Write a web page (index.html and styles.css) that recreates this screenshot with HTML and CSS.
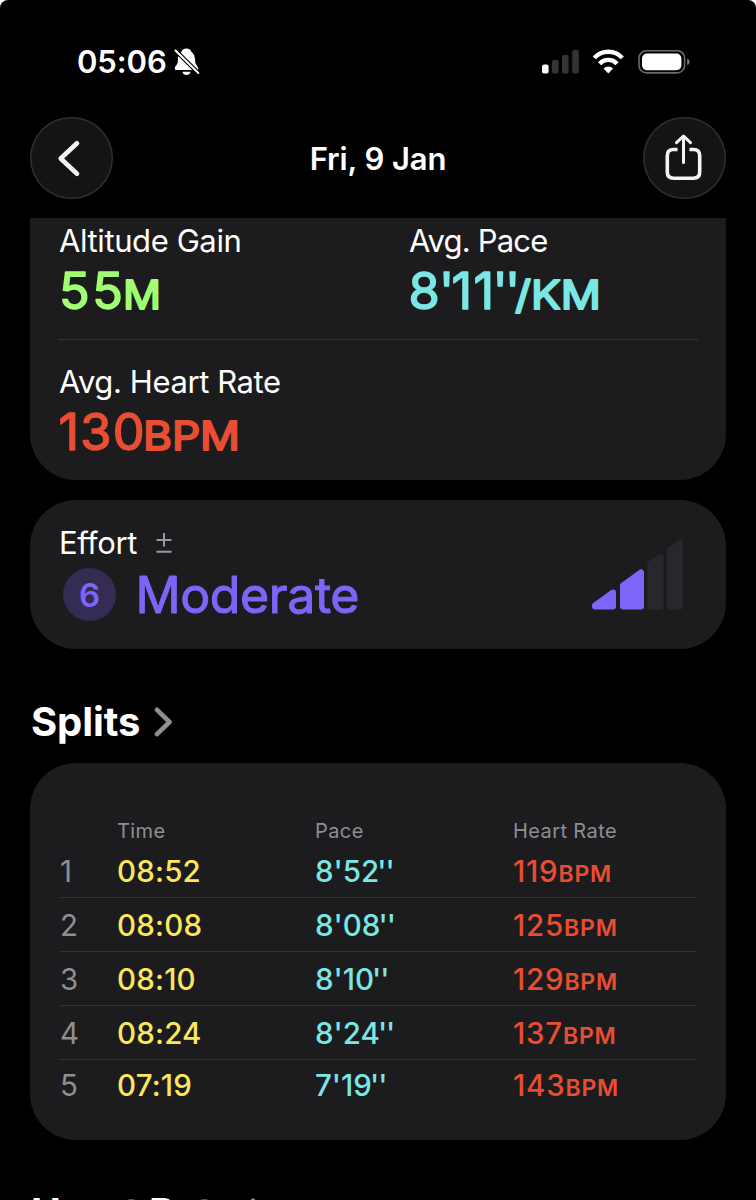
FILE: index.html
```html
<!DOCTYPE html>
<html lang="en">
<head>
<meta charset="utf-8">
<title>Workout</title>
<link rel="stylesheet" href="styles.css">
</head>
<body>
<main class="screen">
  <header class="status">
    <span class="clock">05:06</span>
    <svg class="bell" width="26" height="28" viewBox="0 0 26 28"><path d="M12.500 0.500C9.500 0.500 8 2 7.300 4C4 6.500 4 10 3.800 13.500C3.600 17 0.800 18 0.800 20.500C0.800 21.500 1.500 22 2.500 22H22.500C23.600 22 24.400 21.300 24.200 20.300C23.800 18 21.500 17 21.200 13.500C20.900 9.500 20.800 6.500 17.500 4C16.800 2 15.300 0.500 12.500 0.500Z" fill="#fff"/><path d="M8.500 23.800H16.500C16.500 25.700 14.800 27 12.500 27S8.500 25.700 8.500 23.800Z" fill="#fff"/><path d="M1.500 2.500L24.300 25" stroke="#000" stroke-width="4.200" stroke-linecap="round"/><path d="M1.500 2.500L24.300 25" stroke="#fff" stroke-width="2" stroke-linecap="round"/></svg>
    <svg class="system" width="150" height="26" viewBox="0 0 150 26">
      <rect x="2" y="15.500" width="6.600" height="9" rx="2" fill="#fff"/>
      <g fill="#343434"><rect x="12" y="11" width="6.600" height="13.500" rx="2"/><rect x="22" y="6" width="6.600" height="18.500" rx="2"/><rect x="32.200" y="1" width="6.600" height="23.500" rx="2"/></g>
      <g fill="none" stroke="#fff" stroke-width="4.300"><path d="M54.300 8.900A19 19 0 0 1 82.300 8.900"/><path d="M59.600 14.700A12 12 0 0 1 77 14.700"/></g>
      <path d="M68.300 24.500L63.500 19.500A7 7 0 0 1 73.100 19.500Z" fill="#fff"/>
      <rect x="99" y="1.700" width="45.600" height="22.200" rx="7.500" fill="none" stroke="#6b6b6b" stroke-width="1.600"/>
      <rect x="102" y="4.500" width="39.400" height="16.800" rx="5" fill="#fff"/>
      <path d="M147.200 9.500Q149.700 10.500 149.700 12.900T147.200 16.300Z" fill="#777"/>
    </svg>
  </header>

  <nav class="nav">
    <div class="round"><svg width="82" height="82" viewBox="0 0 82 82"><path d="M47 26.300L30.700 41.500L47 56.700" fill="none" stroke="#f4f4f6" stroke-width="4.600" stroke-linecap="round" stroke-linejoin="round"/></svg></div>
    <h1 class="title">Fri, 9 Jan</h1>
    <div class="round"><svg width="82" height="82" viewBox="0 0 82 82"><g fill="none" stroke="#f4f4f6" stroke-width="3.600" stroke-linecap="round" stroke-linejoin="round"><path d="M34.500 32.500H30.500Q24.300 32.500 24.300 38.700V55Q24.300 61.200 30.500 61.200H50.500Q56.700 61.200 56.700 55V38.700Q56.700 32.500 50.500 32.500H46.500" stroke-linecap="butt"/><path d="M40.500 45.500V20M33.500 25.700L40.500 19L47.500 25.700" stroke-width="3"/></g></svg></div>
  </nav>

  <section class="card summary">
    <div class="metrics">
      <div><div class="label gain">Altitude Gain</div><svg class="value green" width="240" height="60"><text x="0" y="48" textLength="64">55</text><text class="unit" x="64" y="48" textLength="38" lengthAdjust="spacingAndGlyphs">M</text></svg></div>
      <div><div class="label pace-label">Avg. Pace</div><svg class="value cyan" width="240" height="60"><text x="-0.500 30 42.500 64.500 83.500 96" y="48">8'11''</text><text class="unit" x="106" y="48" textLength="86" lengthAdjust="spacingAndGlyphs">/KM</text></svg></div>
    </div>
    <div class="metrics last">
      <div><div class="label hr-label">Avg. Heart Rate</div><svg class="value red" width="240" height="60"><text x="-0.500" y="48" textLength="86">130</text><text class="unit" x="84" y="48" textLength="97" lengthAdjust="spacingAndGlyphs">BPM</text></svg></div>
    </div>
  </section>

  <section class="card effort">
    <div>
      <div class="label effort-label"><span>Effort</span><svg width="16" height="22" viewBox="0 0 16 22"><path d="M8 1V14.500M0.500 8H15.500M0.500 19.700H15.500" stroke="#98989d" stroke-width="2"/></svg></div>
      <div class="level"><span class="badge">6</span><svg class="value purple" width="240" height="60"><text x="-0.500" y="47.500" textLength="224">Moderate</text></svg></div>
    </div>
    <svg class="bars" width="92" height="70" viewBox="0 0 92 70" stroke-width="6" stroke-linejoin="round">
      <path d="M3 65.500V66.400H21V52.500Z" fill="#7f64f9" stroke="#7f64f9"/>
      <path d="M31 66.400V45.500L49 32.500V66.400Z" fill="#7f64f9" stroke="#7f64f9"/>
      <path d="M58.500 66.400V23.500L68.500 17V66.400Z" fill="#28272c" stroke="#28272c"/>
      <path d="M78 66.400V9.700L88 3V66.400Z" fill="#28272c" stroke="#28272c"/>
    </svg>
  </section>

  <h2 class="heading"><span>Splits</span><svg width="20" height="30" viewBox="0 0 20 30"><path d="M3 2.800L15.500 15L3 27.200" fill="none" stroke="#8e8e93" stroke-width="4.600" stroke-linecap="round" stroke-linejoin="round"/></svg></h2>

  <section class="card splits">
    <div class="row head"><span></span><span>Time</span><span>Pace</span><span>Heart Rate</span></div>
    <div class="row"><span class="idx">1</span><span class="yellow">08:52</span><span class="cyan">8'52<span class="sec">''</span></span><span class="red">119<small>BPM</small></span></div>
    <div class="row"><span class="idx">2</span><span class="yellow">08:08</span><span class="cyan">8'08<span class="sec">''</span></span><span class="red">125<small>BPM</small></span></div>
    <div class="row"><span class="idx">3</span><span class="yellow">08:10</span><span class="cyan">8'10<span class="sec">''</span></span><span class="red">129<small>BPM</small></span></div>
    <div class="row"><span class="idx">4</span><span class="yellow">08:24</span><span class="cyan">8'24<span class="sec">''</span></span><span class="red">137<small>BPM</small></span></div>
    <div class="row end"><span class="idx">5</span><span class="yellow">07:19</span><span class="cyan">7'19<span class="sec">''</span></span><span class="red">143<small>BPM</small></span></div>
  </section>

  <h2 class="heading"><span>Heart Rate</span><svg width="20" height="30" viewBox="0 0 20 30"><path d="M3 2.800L15.500 15L3 27.200" fill="none" stroke="#8e8e93" stroke-width="4.600" stroke-linecap="round" stroke-linejoin="round"/></svg></h2>
</main>
</body>
</html>
```
FILE: styles.css
```css
* { box-sizing: border-box; margin: 0; padding: 0; }
html, body { background: #fff; overflow: hidden; }
svg { display: block; flex: none; }
span { white-space: nowrap; }
.screen {
  width: 756px; height: 1200px; overflow: hidden;
  display: flex; flex-direction: column;
  padding: 0 30px; background: #000; color: #fff;
  border-radius: 8px 8px 0 0;
  font-family: Inter, "Liberation Sans", sans-serif;
  font-kerning: normal;
}
.screen > * { flex: none; }
.status { height: 117px; padding: 41px 36px 35px 47px; display: flex; align-items: center; }
.clock { font-size: 31px; font-weight: 600; letter-spacing: -0.1px; width: 96px; }
.bell { margin-left: 1px; }
.system { margin-left: auto; }
.nav { height: 82px; display: flex; align-items: center; justify-content: space-between; }
.round { width: 82.500px; height: 82.500px; border-radius: 50%; background: #141414; box-shadow: inset 0 0 0 1.5px #2e2e2e; }
.title { font-size: 31px; font-weight: 600; line-height: 40px; letter-spacing: -0.1px; padding-top: 2px; }
.card { background: #1c1c1e; border-radius: 46px; width: 695.5px; }
.summary { margin-top: 19px; height: 262px; border-radius: 0 0 46px 46px; padding: 2.500px 28px 0; }
.metrics { display: grid; grid-template-columns: 350px 1fr; height: 119px; padding-left: 1px; border-bottom: 1px solid #343436; }
.last { padding-top: 22px; border: 0; }
.label { font-size: 31px; line-height: 40px; }
.gain, .hr-label { letter-spacing: -0.4px; }
.pace-label { letter-spacing: -0.8px; }
.value { overflow: visible; font-size: 50.500px; font-weight: 400; fill: currentColor; stroke: currentColor; stroke-width: 1.5px; stroke-linejoin: round; }
.unit { font-size: 39px; font-weight: 400; stroke-width: 1.9px; }
.green { color: #a1fd71; }
.cyan { color: #7ae7e4; }
.red { color: #e94d32; }
.yellow { color: #fce75c; }
.purple { color: #7f64f9; font-size: 50px; stroke-width: 1px; }
.effort { margin-top: 20px; height: 149px; padding: 22.500px 42px 0 29px; display: flex; justify-content: space-between; }
.effort-label { display: flex; align-items: center; gap: 19px; letter-spacing: -0.4px; }
.level { height: 64px; display: flex; align-items: center; padding-left: 4px; gap: 20px; color: #7f64f9; }
.badge { width: 53px; height: 53px; border-radius: 50%; background: #352c54; font-size: 33px; font-weight: 600; line-height: 54px; text-align: center; }
.bars { margin-top: 17px; }
.heading { margin-top: 48px; height: 49px; display: flex; align-items: center; gap: 14px; padding-left: 1px; font-size: 40px; font-weight: 700; line-height: 49px; letter-spacing: -0.1px; }
.splits { margin-top: 17px; height: 377px; padding: 54px 29px 0 30px; }
.row { display: grid; grid-template-columns: 57px 198px 198px 1fr; height: 54px; line-height: 55px; border-bottom: 1px solid #343436; font-size: 29.500px; font-weight: 500; letter-spacing: 0.2px; }
.head { height: 27px; line-height: 28px; font-size: 20px; font-weight: 400; color: #8e8e93; border: 0; letter-spacing: 0.4px; }
.end { height: 52px; line-height: 51px; border: 0; }
.row .cyan { letter-spacing: 0; }
.row .sec { letter-spacing: -1px; margin-left: -2px; }
.idx { color: #8e8e93; font-weight: 400; }
small { font-size: 23px; line-height: 1; font-weight: 600; letter-spacing: 0.8px; }
.splits .red { letter-spacing: 0.8px; }
```
